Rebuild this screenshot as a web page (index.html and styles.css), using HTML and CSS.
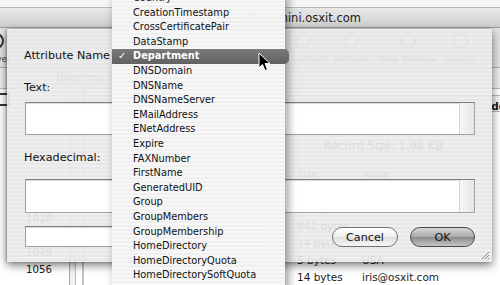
FILE: index.html
```html
<!DOCTYPE html>
<html lang="en">

<head>
    <meta charset="UTF-8">
    <meta name="viewport" content="width=device-width, initial-scale=1.0">
    <link rel="stylesheet" href="styles.css">
    <title>Directory Inspector</title>
</head>

<body>
    <div class="win">
        <div class="desk"></div>
        <div class="titlebar"><span>Directory: mini.osxit.com</span></div>
        <div class="toolbar">
            <div class="tool tool-left"><span class="ico"></span><span>Server</span></div>
            <div class="tool t1"><span class="ico"></span><span>Disconnect</span></div>
            <div class="tool t2"><span class="ico"></span><span>Refresh</span></div>
            <div class="tool t3"><span class="ico"></span><span>New Window</span></div>
            <div class="tool t4"><span class="ico"></span><span>Search</span></div>
        </div>
        <div class="pathbar">Directory: /L</div>
        <div class="panes">
            <div class="pane-side"><span class="side-ico"></span></div>
            <div class="pane-list">
                <div class="row">1028</div>
                <div class="row">1037</div>
                <div class="row">1049</div>
                <div class="row">1056</div>
            </div>
            <div class="pane-split"></div>
            <div class="pane-record">
                <div class="rec-head"><span class="cut">do</span></div>
                <div class="rec-size">Record Size: 1.98 KB</div>
                <div class="rec-table">
                    <div class="hd"></div><div class="hd">Size</div><div class="hd">Value</div>
                    <div></div><div>8 bytes</div><div>Cupertino</div>
                    <div></div><div>22 bytes</div><div>Staff</div>
                    <div></div><div>842 bytes</div><div></div>
                    <div></div><div>14 bytes</div><div></div>
                    <div></div><div>5 bytes</div><div>USA</div>
                    <div></div><div>14 bytes</div><div>iris@osxit.com</div>
                </div>
            </div>
        </div>
    </div>

    <div class="sheet">
        <div class="attr-row">Attribute Name</div>
        <div class="label first">Text:</div>
        <div class="field tall"><span class="scroller"></span></div>
        <div class="label">Hexadecimal:</div>
        <div class="field tall hex"><span class="scroller"></span></div>
        <div class="bottom-row">
            <div class="field short"></div>
            <div class="buttons">
                <button class="btn">Cancel</button>
                <button class="btn btn-ok">OK</button>
            </div>
        </div>
        <svg class="grip" width="9" height="9" viewBox="0 0 9 9">
            <path d="M8 1L1 8M8 4L4 8M8 7L7 8" stroke="#8a8a8a" stroke-width="1" />
        </svg>
    </div>

    <ul class="menu">
        <li>Country</li>
        <li>CreationTimestamp</li>
        <li>CrossCertificatePair</li>
        <li>DataStamp</li>
        <li class="selected"><span class="check">&#10003;</span>Department</li>
        <li>DNSDomain</li>
        <li>DNSName</li>
        <li>DNSNameServer</li>
        <li>EMailAddress</li>
        <li>ENetAddress</li>
        <li>Expire</li>
        <li>FAXNumber</li>
        <li>FirstName</li>
        <li>GeneratedUID</li>
        <li>Group</li>
        <li>GroupMembers</li>
        <li>GroupMembership</li>
        <li>HomeDirectory</li>
        <li>HomeDirectoryQuota</li>
        <li>HomeDirectorySoftQuota</li>
        <li>HomeLocOwner</li>
    </ul>

    <svg class="cursor" width="13" height="20" viewBox="0 0 13 20">
        <path d="M1 1L1 16L4.5 12.5L7 18.5L9.5 17.5L7 11.5L12 11.5Z" fill="#000" stroke="#fff" stroke-width="1" />
    </svg>
</body>

</html>
```

FILE: styles.css
```css
body {
    margin: 0;
    width: 500px;
    height: 285px;
    overflow: hidden;
    position: relative;
    background-color: #f4f4f4;
    font-family: "DejaVu Sans", Verdana, sans-serif;
    color: #1a1a1a;
}

/* window behind the sheet */
.win {
    display: flex;
    flex-direction: column;
    height: 285px;
}

.desk {
    height: 8px;
    background-color: #f5f5f5;
    border-bottom: 1px solid #b8b8b8;
}

.titlebar {
    height: 20px;
    display: flex;
    align-items: center;
    padding-left: 217px;
    font-size: 11.5px;
    color: #1c1c1c;
    background: linear-gradient(#e8e8e8, #cfcfcf);
    border-bottom: 1px solid #9c9c9c;
}

.toolbar {
    height: 42px;
    display: flex;
    background-color: #e3e3e3;
    border-bottom: 1px solid #b0b0b0;
    font-size: 9px;
    color: #444;
}

.tool {
    display: flex;
    flex-direction: column;
    align-items: center;
    gap: 5px;
    padding-top: 5px;
}

.tool .ico {
    width: 16px;
    height: 16px;
    border: 2px solid #8c8c8c;
    border-radius: 50%;
    box-sizing: border-box;
}

.tool-left {
    width: 40px;
    margin-left: -24px;
}

.tool-left .ico {
    border-color: #333;
}

.t1 {
    margin-left: 262px;
    width: 50px;
}

.t2 {
    width: 46px;
}

.t3 {
    width: 68px;
}

.t4 {
    width: 38px;
}

.pathbar {
    height: 22px;
    line-height: 20px;
    padding-left: 56px;
    font-size: 10px;
    color: #555;
    background-color: #ececec;
    border-bottom: 1px solid #bbb;
}

.panes {
    flex: 1;
    display: flex;
    background-color: #fff;
}

.pane-side {
    width: 0;
    position: relative;
}

.side-ico {
    display: block;
    width: 8px;
    height: 9px;
    margin: 4px 0 0 -2px;
    border: 2px solid #333;
}

.pane-list {
    width: 70px;
    padding-top: 121px;
    border-right: 1px solid #a8a8a8;
    font-size: 10.2px;
    box-sizing: border-box;
}

.pane-list .row {
    height: 17px;
    line-height: 17px;
    padding-left: 26px;
}

.pane-split {
    width: 5px;
    border-right: 1px solid #bdbdbd;
    background-color: #f0f0f0;
}

.pane-record {
    flex: 1;
    margin-left: 6px;
    border-left: 2px solid #c4c4c4;
    font-size: 10.5px;
}

.rec-head {
    margin-top: 6px;
    height: 15px;
    display: flex;
    align-items: center;
    font-weight: bold;
    border-top: 1px solid #b5b5b5;
    border-bottom: 1px solid #b5b5b5;
    background-color: #f2f2f2;
}

.rec-head .cut {
    margin-left: auto;
    margin-right: -6px;
    padding-top: 4px;
}

.rec-size {
    margin-top: 26px;
    height: 16px;
    line-height: 16px;
    padding-left: 240px;
    font-size: 11.5px;
}

.rec-table {
    margin-top: 12px;
    display: grid;
    grid-template-columns: 213px 65px 1fr;
    grid-auto-rows: 17px;
    align-items: center;
}

.rec-table .hd {
    height: 16px;
    line-height: 16px;
    font-size: 10px;
    color: #444;
}

/* sheet */
.sheet {
    position: absolute;
    left: 7px;
    top: 29px;
    width: 485px;
    height: 233px;
    box-sizing: border-box;
    padding: 19px 17px 0 18px;
    background: repeating-linear-gradient(rgba(237, 237, 237, 0.93) 0 2px, rgba(230, 230, 230, 0.93) 2px 4px);
    box-shadow: 0 3px 9px rgba(0, 0, 0, 0.55), -1px 0 2px rgba(0, 0, 0, 0.25);
    font-size: 11.2px;
    color: #111;
}

.attr-row {
    height: 16px;
    line-height: 16px;
    margin-left: -1px;
}

.label {
    height: 16px;
    line-height: 16px;
    margin-top: 15px;
    margin-left: -1px;
}

.label.first {
    margin-top: 16px;
}

.field {
    background-color: #fff;
    border: 1px solid #a2a2a2;
    border-top-color: #7c7c7c;
    box-shadow: inset 0 1px 1px rgba(0, 0, 0, 0.15);
    box-sizing: border-box;
}

.field.tall {
    height: 33px;
    margin-top: 6px;
    display: flex;
    justify-content: flex-end;
}

.field.hex {
    height: 34px;
    margin-top: 13px;
}

.scroller {
    width: 14px;
    background: linear-gradient(90deg, #f7f7f7, #e6e6e6);
    border-left: 1px solid #d2d2d2;
}

.bottom-row {
    margin-top: 13px;
    display: flex;
    align-items: flex-start;
}

.field.short {
    width: 240px;
    height: 21px;
}

.buttons {
    margin-left: auto;
    display: flex;
    gap: 12px;
    padding-top: 1px;
}

.btn {
    width: 66px;
    height: 20px;
    padding: 0;
    border-radius: 10px;
    border: 1px solid #737373;
    background: linear-gradient(#ffffff, #efefef 50%, #dedede 51%, #f6f6f6);
    font-family: "DejaVu Sans", Verdana, sans-serif;
    font-size: 11.2px;
    color: #111;
}

.btn-ok {
    width: 65px;
    border-color: #4a4a4a;
    background: linear-gradient(#d6d6d6, #a8a8a8 50%, #8b8b8b 51%, #c4c4c4);
}

.grip {
    position: absolute;
    right: 2px;
    bottom: 2px;
}

/* popup menu */
.menu {
    position: absolute;
    left: 112px;
    top: -9px;
    width: 173px;
    margin: 0;
    padding: 0;
    list-style: none;
    background: repeating-linear-gradient(rgba(248, 248, 248, 0.97) 0 2px, rgba(240, 240, 240, 0.97) 2px 4px);
    box-shadow: 3px 2px 9px rgba(0, 0, 0, 0.4);
    font-size: 9.8px;
    color: #111;
}

.menu li {
    height: 14.6px;
    line-height: 14.6px;
    padding-left: 21px;
    position: relative;
}

.menu li.selected {
    margin-right: -4px;
    border-radius: 0 5px 5px 0;
    background: linear-gradient(#7a7a7a, #616161);
    color: #fff;
    font-weight: bold;
}

.check {
    position: absolute;
    left: 6px;
    font-weight: normal;
}

.cursor {
    position: absolute;
    left: 258px;
    top: 52px;
}
```
